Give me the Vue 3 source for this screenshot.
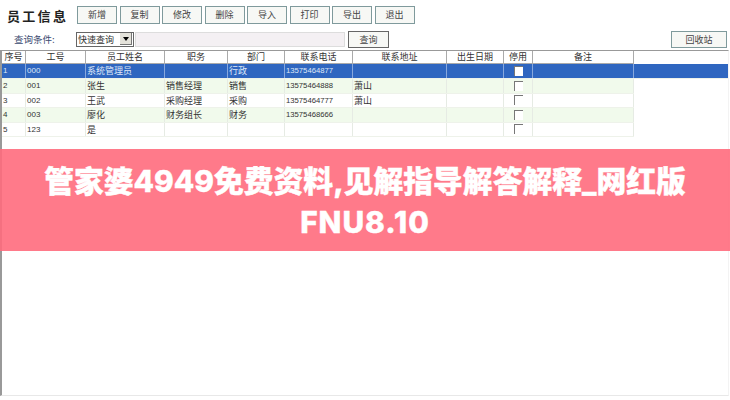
<script setup>
const buttons = ['新增', '复制', '修改', '删除', '导入', '打印', '导出', '退出']
const columns = [
  { label: '序号', w: 24 }, { label: '工号', w: 60 }, { label: '员工姓名', w: 79 },
  { label: '职务', w: 63 }, { label: '部门', w: 57 }, { label: '联系电话', w: 68 },
  { label: '联系地址', w: 94 }, { label: '出生日期', w: 57 }, { label: '停用', w: 29 }, { label: '备注', w: 101 }
]
const rows = [
  ['1', '000', '系统管理员', '', '行政', '13575464877', ''],
  ['2', '001', '张生', '销售经理', '销售', '13575464888', '萧山'],
  ['3', '002', '王武', '采购经理', '采购', '13575464777', '萧山'],
  ['4', '003', '廖化', '财务组长', '财务', '13575468666', ''],
  ['5', '123', '是', '', '', '', '']
]
const grid = columns.map(c => c.w + 'px').join(' ')
</script>

<template>
  <div class="page">
    <div class="toolbar">
      <h1 class="title">员工信息</h1>
      <div class="buttons">
        <button v-for="b in buttons" :key="b" class="btn">{{ b }}</button>
      </div>
    </div>
    <div class="query">
      <span class="query-label">查询条件:</span>
      <div class="select"><span>快速查询</span><span class="arrow"><i></i></span></div>
      <div class="input"></div>
      <button class="btn search">查询</button>
      <button class="btn recycle">回收站</button>
    </div>
    <div class="table">
      <div class="head" :style="{ gridTemplateColumns: grid }">
        <div v-for="c in columns" :key="c.label" class="th">{{ c.label }}</div>
      </div>
      <div v-for="(r, i) in rows" :key="i" class="row" :class="{ selected: i === 0, tint: i % 2 === 1 }">
        <div class="cells" :style="{ gridTemplateColumns: grid }">
          <div class="td num">{{ r[0] }}</div>
          <div class="td num">{{ r[1] }}</div>
          <div class="td">{{ r[2] }}</div>
          <div class="td">{{ r[3] }}</div>
          <div class="td">{{ r[4] }}</div>
          <div class="td tel">{{ r[5] }}</div>
          <div class="td">{{ r[6] }}</div>
          <div class="td"></div>
          <div class="td center"><span class="check"></span></div>
          <div class="td"></div>
        </div>
      </div>
    </div>
    <div class="banner">管家婆4949免费资料,见解指导解答解释_网红版<span class="code">FNU8.10</span></div>
  </div>
</template>

<style>
html, body { margin: 0; background: #fff; }
</style>

<style scoped>
.page { position: relative; width: 730px; height: 400px; overflow: hidden; background: #fff; font-family: "Liberation Sans", "Noto Sans CJK SC", sans-serif; color: #333; }
.toolbar { display: flex; align-items: center; height: 18px; padding: 6px 0 0 7px; }
.title { width: 70px; margin: 0; font: 700 13px/17px "Noto Sans CJK SC", sans-serif; letter-spacing: 2.3px; color: #222; }
.buttons { display: flex; gap: 2.5px; }
.btn { box-sizing: border-box; width: 40px; height: 18px; padding: 0; border: 1px solid #7f9a9c; background: #f7f8f5; color: #444; font: 9px/16px "Noto Sans CJK SC", sans-serif; }
.query { display: flex; align-items: center; height: 18px; margin-top: 6px; padding-left: 14px; }
.query-label { width: 62px; font: 9.5px "Noto Sans CJK SC", sans-serif; color: #3a4a70; }
.select { box-sizing: border-box; display: flex; justify-content: space-between; align-items: center; width: 58px; height: 15px; padding: 0 1px; border: 1px solid #666; font: 9px "Noto Sans CJK SC", sans-serif; background: #fff; }
.arrow { display: flex; align-items: center; justify-content: center; width: 12px; height: 12px; background: #e4e2da; border-right: 1px solid #777; border-bottom: 1px solid #777; box-sizing: border-box; }
.arrow i { border: 3px solid transparent; border-top: 4px solid #000; border-bottom: 0; }
.input { box-sizing: border-box; width: 210px; height: 15px; margin-left: 1px; background: #f4f0f3; border: 1px solid #ddd; }
.search { margin-left: 3px; width: 41px; height: 17px; border-color: #666; }
.recycle { width: 56px; height: 17px; margin-left: auto; margin-right: 3px; }
.table { box-sizing: border-box; margin-top: 2px; width: 729px; height: 346px; border-left: 2px solid #999; border-top: 1px solid #999; border-right: 1px solid #f3f3f3; border-bottom: 1px solid #e8e8e8; }
.head { display: grid; height: 12px; border-bottom: 1px solid #aaa; width: 632px; }
.th { box-sizing: border-box; border-right: 1px solid #aaa; text-align: center; font: 9px/12px "Noto Sans CJK SC", sans-serif; color: #333; overflow: hidden; }
.row { height: 14.5px; width: 632px; border-bottom: 1px solid #eef2ea; box-sizing: border-box; }
.row.tint { background: #f1faec; }
.row.selected { height: 15px; width: 726px; background: #2f66c0; color: #dfe8f8; }
.cells { display: grid; height: 100%; }
.td { box-sizing: border-box; border-right: 1px solid #e6ebe4; padding-left: 1px; font: 9px/14px "Noto Sans CJK SC", sans-serif; white-space: nowrap; overflow: hidden; }
.selected .td { border-right-color: #88a8dd; }
.num { font: 8px/14px "Liberation Sans", sans-serif; }
.tel { font: 7.7px/14px "Liberation Sans", sans-serif; }
.center { display: flex; align-items: center; justify-content: center; padding: 0; }
.check { box-sizing: border-box; width: 9px; height: 10px; border-top: 1px solid #777; border-left: 1px solid #777; background: #fff; }
.banner { position: absolute; left: 0; right: 0; top: 149px; height: 102px; box-sizing: border-box; padding: 12px 40px 0; background: rgba(255, 107, 125, 0.9); color: #fff; font: 800 29.8px/41px "Inter", "Noto Sans CJK SC", sans-serif; -webkit-text-stroke: 0.4px #fff; text-align: center; }
.code { letter-spacing: 1px; }
</style>
